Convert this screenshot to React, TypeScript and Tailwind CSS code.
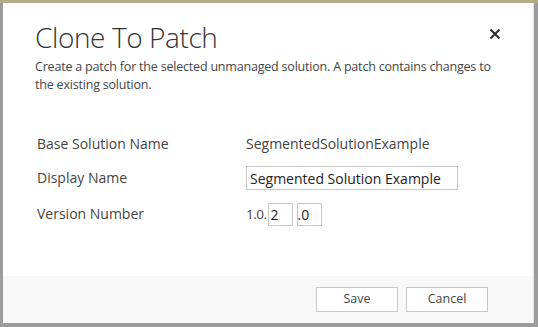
export default function App() {
  return (
    <div
      className="w-[538px] h-[327px] bg-[#9c9c9c] border-t-[3px] border-t-[#b3ac86] pl-[3px] pr-[4px] pb-[4px] flex"
      style={{ fontFamily: '"Open Sans", "Liberation Sans", sans-serif' }}
    >
      <div className="flex-1 bg-white flex flex-col border-r border-[#e6e6e6]">
        {/* Header */}
        <div className="relative px-[32px] pt-[16px]">
          <h1 className="text-[28px] font-light text-[#333] leading-[36px] tracking-[-0.4px]">
            Clone To Patch
          </h1>
          <p className="mt-[3px] w-[462px] text-[12.5px] leading-[18px] text-[#444] tracking-[-0.2px]">
            Create a patch for the selected unmanaged solution. A patch contains changes to the existing solution.
          </p>
          <button className="absolute right-[32px] top-[25px] text-[#333]">
            <svg width="12" height="12" viewBox="0 0 12 12">
              <path d="M1.5 1.5 L10.5 10.5 M10.5 1.5 L1.5 10.5" stroke="currentColor" strokeWidth="2.2" />
            </svg>
          </button>
        </div>

        {/* Form */}
        <div className="flex-1 px-[34px] pt-[38px] text-[14px] text-[#444]">
          <div className="grid grid-cols-[209px_1fr] gap-y-[10px] items-center">
            <div className="h-[24px] leading-[24px]">Base Solution Name</div>
            <div className="h-[24px] leading-[24px]">SegmentedSolutionExample</div>

            <div className="h-[24px] leading-[24px]">Display Name</div>
            <input
              readOnly
              value="Segmented Solution Example"
              className="w-[212px] h-[24px] border border-[#c6c6c6] px-[3px] text-[14px] text-[#222] outline-none"
            />

            <div className="h-[24px] leading-[24px] mt-[2px]">Version Number</div>
            <div className="flex items-center gap-[4px] mt-[2px]">
              <span className="text-[13.5px] tracking-[-0.5px] -mr-[3px]">1.0.</span>
              <input
                readOnly
                value="2"
                className="w-[25px] h-[23px] border border-[#c6c6c6] px-[2px] text-[14px] text-[#222] outline-none"
              />
              <input
                readOnly
                value=".0"
                className="w-[25px] h-[23px] border border-[#c6c6c6] px-0 text-[14px] text-[#222] outline-none"
              />
            </div>
          </div>
        </div>

        {/* Footer */}
        <div className="h-[47px] bg-[#f8f8f8] flex items-start justify-end gap-[8px] pt-[11px] pr-[45px]">
          <button className="w-[82px] h-[25px] bg-white border border-[#c6c6c6] text-[12.5px] text-[#444]">
            Save
          </button>
          <button className="w-[82px] h-[25px] bg-white border border-[#c6c6c6] text-[12.5px] text-[#444]">
            Cancel
          </button>
        </div>
      </div>
    </div>
  );
}
